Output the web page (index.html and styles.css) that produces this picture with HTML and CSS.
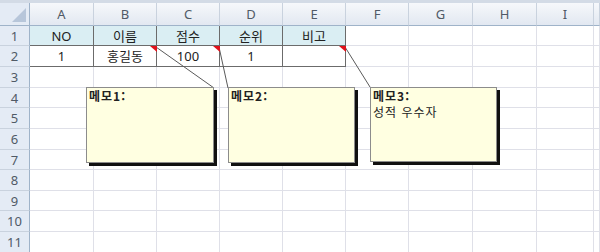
FILE: index.html
```html
<!DOCTYPE html>
<html lang="ko">
<head>
  <meta charset="UTF-8">
  <meta name="viewport" content="width=device-width, initial-scale=1.0">
  <title>메모 예제</title>
  <link rel="stylesheet" href="styles.css">
</head>
<body>
  <div class="sheet">
    <div class="topbar"></div>
    <table class="grid">
      <colgroup>
        <col class="w-head">
        <col class="w-64">
        <col class="w-63"><col class="w-63"><col class="w-63"><col class="w-63"><col class="w-63">
        <col class="w-64"><col class="w-64">
        <col class="w-57">
        <col>
      </colgroup>
      <thead>
        <tr class="r-head">
          <th class="corner"></th>
          <th>A</th><th>B</th><th>C</th><th>D</th><th>E</th>
          <th>F</th><th>G</th><th>H</th><th>I</th><th></th>
        </tr>
      </thead>
      <tbody>
        <tr class="r-20">
          <th>1</th>
          <td class="title">NO</td><td class="title">이름</td><td class="title">점수</td><td class="title">순위</td><td class="title">비고</td>
          <td></td><td></td><td></td><td></td><td></td>
        </tr>
        <tr class="r-21">
          <th>2</th>
          <td class="data">1</td><td class="data">홍길동</td><td class="data">100</td><td class="data">1</td><td class="data"></td>
          <td></td><td></td><td></td><td></td><td></td>
        </tr>
        <tr class="r-21"><th>3</th><td></td><td></td><td></td><td></td><td></td><td></td><td></td><td></td><td></td><td></td></tr>
        <tr class="r-20"><th>4</th><td></td><td></td><td></td><td></td><td></td><td></td><td></td><td></td><td></td><td></td></tr>
        <tr class="r-21"><th>5</th><td></td><td></td><td></td><td></td><td></td><td></td><td></td><td></td><td></td><td></td></tr>
        <tr class="r-21"><th>6</th><td></td><td></td><td></td><td></td><td></td><td></td><td></td><td></td><td></td><td></td></tr>
        <tr class="r-20"><th>7</th><td></td><td></td><td></td><td></td><td></td><td></td><td></td><td></td><td></td><td></td></tr>
        <tr class="r-21"><th>8</th><td></td><td></td><td></td><td></td><td></td><td></td><td></td><td></td><td></td><td></td></tr>
        <tr class="r-20"><th>9</th><td></td><td></td><td></td><td></td><td></td><td></td><td></td><td></td><td></td><td></td></tr>
        <tr class="r-21"><th>10</th><td></td><td></td><td></td><td></td><td></td><td></td><td></td><td></td><td></td><td></td></tr>
        <tr class="r-21"><th>11</th><td></td><td></td><td></td><td></td><td></td><td></td><td></td><td></td><td></td><td></td></tr>
      </tbody>
    </table>

    <!-- comment connectors and red markers -->
    <svg class="links" width="600" height="252" viewBox="0 0 600 252">
      <line x1="156" y1="47" x2="214" y2="88" />
      <line x1="219" y1="47" x2="228" y2="88" />
      <line x1="345" y1="47" x2="370" y2="87" />
      <polygon class="mark" points="150,46 157,46 157,52" />
      <polygon class="mark" points="213,46 220,46 220,52" />
      <polygon class="mark" points="339,46 346,46 346,52" />
    </svg>

    <div class="memo memo-1"><b>메모1:</b></div>
    <div class="memo memo-2"><b>메모2:</b></div>
    <div class="memo memo-3"><b>메모3:</b><br>성적 우수자</div>
  </div>
</body>
</html>
```

FILE: styles.css
```css
body {
  margin: 0;
  background: #fff;
  font-family: "Noto Sans", "Noto Sans CJK KR", sans-serif;
}
.sheet {
  position: relative;
  width: 600px;
  height: 252px;
  overflow: hidden;
}
.topbar {
  height: 3px;
  background: #d3dbe6;
}
.grid {
  width: 600px;
  table-layout: fixed;
  border-collapse: separate;
  border-spacing: 0;
  font-size: 13px;
}
.w-head { width: 30px; }
.w-64 { width: 64px; }
.w-63 { width: 63px; }
.w-57 { width: 57px; }
.grid th,
.grid td {
  padding: 0;
  border-right: 1px solid #dfe0e8;
  border-bottom: 1px solid #dfe0e8;
  text-align: center;
  vertical-align: middle;
  white-space: nowrap;
  overflow: hidden;
  line-height: 16px;
}
.grid .r-head th {
  height: 22px;
  font-weight: normal;
  color: #505a66;
  background: linear-gradient(#f6f8fb, #e2e8f1);
  border-right-color: #c9d2de;
  border-bottom-color: #9fb3c9;
}
.grid .r-head .corner {
  position: relative;
  background: #e4ebf5;
  border-right-color: #9fb3c9;
}
.r-head .corner::after {
  content: "";
  position: absolute;
  right: 3px;
  bottom: 3px;
  border-left: 14px solid transparent;
  border-bottom: 14px solid #b7c6da;
}
.grid .r-20 th, .grid .r-20 td { height: 19px; }
.grid .r-21 th, .grid .r-21 td { height: 20px; }
.grid tbody th {
  font-weight: normal;
  color: #505a66;
  background: #e4ebf5;
  border-right-color: #9fb3c9;
  border-bottom-color: #c9d2de;
}
.grid .title {
  background: #daeef3;
}
.grid .title,
.grid .data {
  border-right-color: #6b6b6b;
  border-bottom-color: #6b6b6b;
  color: #222;
}
.links {
  position: absolute;
  left: 0;
  top: 0;
  pointer-events: none;
}
.links line {
  stroke: #5a5a5a;
  stroke-width: 1;
}
.links .mark {
  fill: #e0121b;
}
.memo {
  position: absolute;
  top: 87px;
  box-sizing: border-box;
  height: 76px;
  padding: 0 2px;
  background: #ffffe1;
  border: 1px solid #8c8c8c;
  box-shadow: 3px 3px 0 #111;
  font-family: "Noto Sans CJK KR", sans-serif;
  font-size: 12px;
  letter-spacing: 1px;
  line-height: 16px;
  color: #222;
}
.memo b {
  font-weight: bold;
}
.memo-1 { left: 86px; width: 128px; }
.memo-2 { left: 228px; width: 127px; }
.memo-3 { left: 370px; width: 127px; height: 75px; }
```
